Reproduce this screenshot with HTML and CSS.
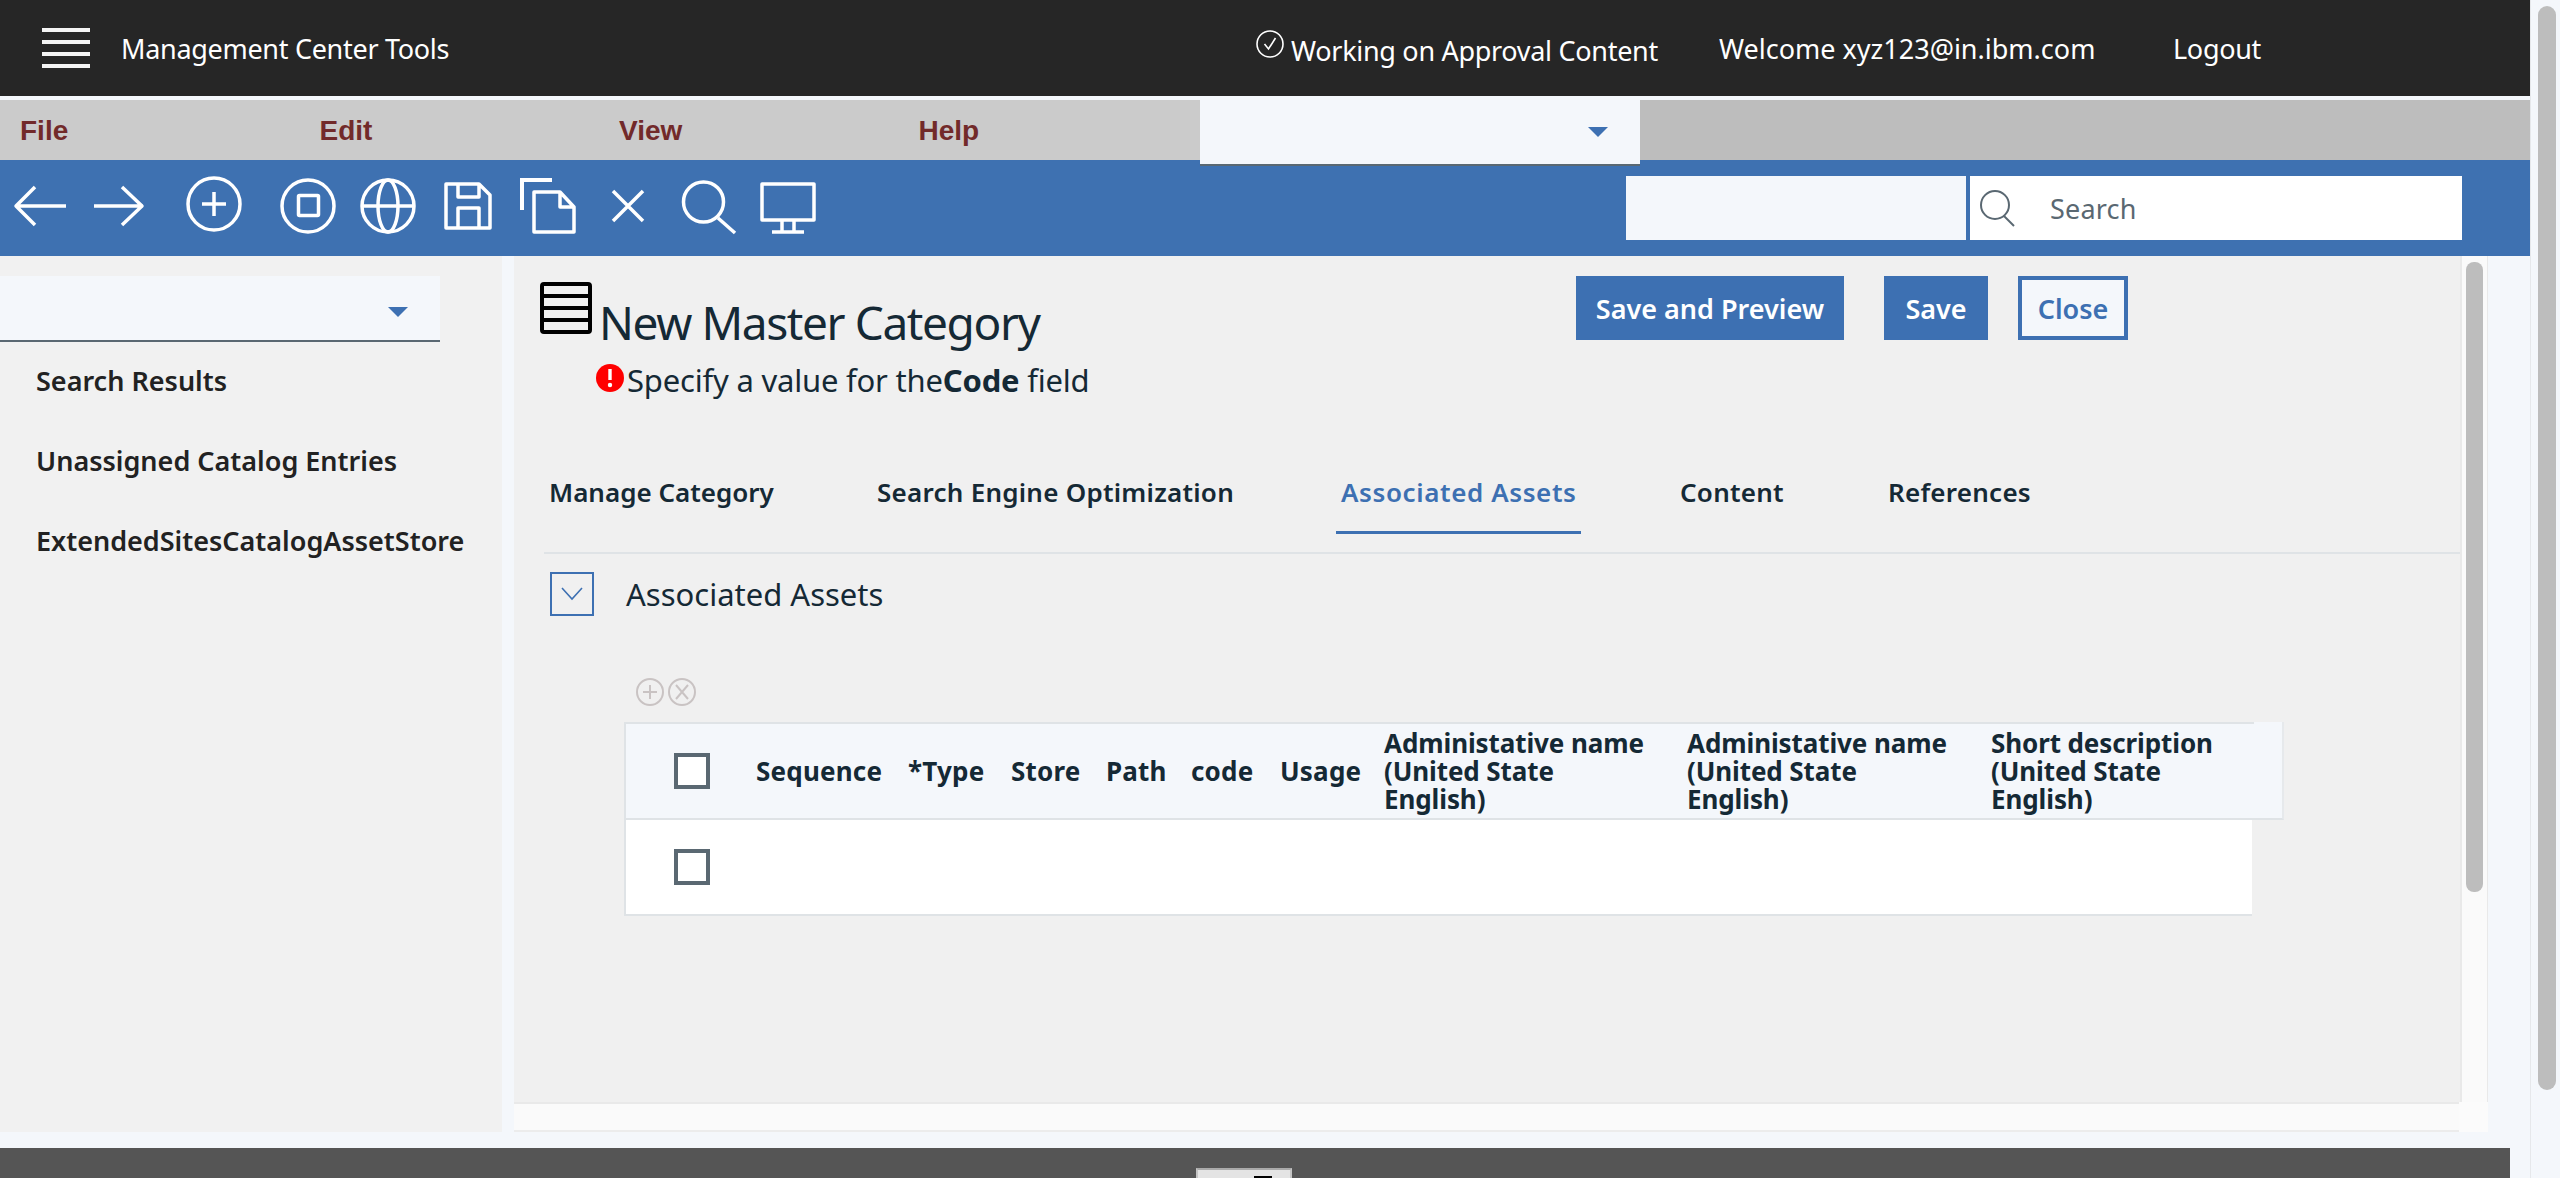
FILE: index.html
```html
<!DOCTYPE html>
<html lang="en">
<head>
    <meta charset="UTF-8">
    <title>Management Center Tools</title>
    <link rel="stylesheet" href="styles.css">
</head>
<body>
<div class="page">
    <div class="page-main">
        <div class="top-bar">
            <div class="hamburger"><span></span><span></span><span></span><span></span></div>
            <div class="app-title">Management Center Tools</div>
            <div class="working">
                <svg class="check-icon" width="28" height="28" viewBox="0 0 28 28" fill="none" stroke="#fff" stroke-width="1.6"><circle cx="14" cy="14" r="13"/><path d="M8.5 14l4 5L19.5 8"/></svg>
                <span>Working on Approval Content</span>
            </div>
            <div class="welcome">Welcome xyz123@in.ibm.com</div>
            <div class="logout">Logout</div>
        </div>

        <div class="menu-bar">
            <div class="menu-item">File</div>
            <div class="menu-item">Edit</div>
            <div class="menu-item">View</div>
            <div class="menu-item">Help</div>
            <div class="menu-select"><i class="caret"></i></div>
        </div>

        <div class="tool-bar">
            <svg class="tool-icons" width="830" height="96" viewBox="0 0 830 96" fill="none" stroke="#fff" stroke-width="3.5" stroke-linejoin="round">
                <path d="M66 46H16M35 27L16 46l19 19"/>
                <path d="M94 46h49M122 27l20 19-20 19"/>
                <circle cx="214" cy="44" r="26"/><path d="M214 32v24M202 44h24"/>
                <circle cx="308" cy="46" r="26"/><rect x="298.5" y="35.5" width="20" height="20" rx="1"/>
                <circle cx="388" cy="46" r="26"/><ellipse cx="388" cy="46" rx="10" ry="26"/><path d="M362 46h52"/>
                <path d="M446 24h33l11 11v33h-44zM458 24v13h21V24M458 68V48h21v20"/>
                <path d="M522 50V20h30" stroke-width="4" stroke-linejoin="miter"/>
                <path d="M534 32h26l14 15v25h-40zM560 32v15h14"/>
                <path d="M613 31l30 30M643 31l-30 30"/>
                <circle cx="703.5" cy="42" r="20"/><path d="M718 58l17 15"/>
                <path d="M762 24h52v36h-52zM782 60v12M794 60v12M772 72h32"/>
            </svg>
            <div class="search-blank"></div>
            <div class="search-box">
                <svg width="40" height="40" viewBox="0 0 40 40" fill="none" stroke="#5a6872" stroke-width="2"><circle cx="17" cy="17" r="14"/><path d="M26 28l10 10"/></svg>
                <span>Search</span>
            </div>
        </div>

        <div class="work-area">
            <div class="side-panel">
                <div class="side-select"><i class="caret"></i></div>
                <div class="side-item">Search Results</div>
                <div class="side-item">Unassigned Catalog Entries</div>
                <div class="side-item">ExtendedSitesCatalogAssetStore</div>
            </div>

            <div class="content">
                <div class="content-top">
                    <div class="panel">
                        <div class="form-head">
                            <div class="form-title">
                                <div class="title-line">
                                    <svg class="grid-icon" width="52" height="52" viewBox="0 0 52 52" fill="none" stroke="#000" stroke-width="4"><rect x="2" y="2" width="48" height="48" rx="2"/><path d="M2 14h48M2 26h48M2 38h48"/></svg>
                                    <h1>New Master Category</h1>
                                </div>
                                <div class="error-line">
                                    <svg width="28" height="28" viewBox="0 0 28 28"><circle cx="14" cy="14" r="14" fill="#f00"/><path d="M14 5v11" stroke="#fff" stroke-width="3.4"/><circle cx="14" cy="21" r="2.2" fill="#fff"/></svg>
                                    <span>Specify a value for the<b>Code</b> field</span>
                                </div>
                            </div>
                            <div class="form-buttons">
                                <button class="btn btn-preview">Save and Preview</button>
                                <button class="btn btn-save">Save</button>
                                <button class="btn btn-close">Close</button>
                            </div>
                        </div>

                        <div class="tabs">
                            <div class="tab">Manage Category</div>
                            <div class="tab">Search Engine Optimization</div>
                            <div class="tab active">Associated Assets</div>
                            <div class="tab">Content</div>
                            <div class="tab">References</div>
                        </div>

                        <div class="section-head">
                            <div class="collapse-btn"><svg width="24" height="14" viewBox="0 0 24 14" fill="none" stroke="#3d70b2" stroke-width="1.6"><path d="M2 1l10 11L22 1"/></svg></div>
                            <span>Associated Assets</span>
                        </div>

                        <div class="mini-tools">
                            <svg width="28" height="28" viewBox="0 0 28 28" fill="none" stroke="#c9c3c3" stroke-width="2"><circle cx="14" cy="14" r="13"/><path d="M14 7v14M7 14h14"/></svg>
                            <svg width="28" height="28" viewBox="0 0 28 28" fill="none" stroke="#c9c3c3" stroke-width="2"><circle cx="14" cy="14" r="13"/><path d="M8 7l12 14M20 7L8 21"/></svg>
                        </div>

                        <div class="assets-table">
                            <div class="table-row table-head">
                                <div class="cell"><i class="checkbox"></i></div>
                                <div class="cell">Sequence</div>
                                <div class="cell">*Type</div>
                                <div class="cell">Store</div>
                                <div class="cell">Path</div>
                                <div class="cell">code</div>
                                <div class="cell">Usage</div>
                                <div class="cell">Administative name (United State English)</div>
                                <div class="cell">Administative name (United State English)</div>
                                <div class="cell">Short description (United State English)</div>
                            </div>
                            <div class="table-row table-body">
                                <div class="cell"><i class="checkbox"></i></div>
                            </div>
                        </div>
                    </div>
                    <div class="panel-scroll"><div class="panel-thumb"></div></div>
                </div>
                <div class="content-strip"></div>
            </div>
        </div>

        <div class="footer-gap"></div>
        <div class="footer"><div class="footer-tab"><i></i></div></div>
    </div>
    <div class="page-scroll"><div class="page-thumb"></div></div>
</div>
</body>
</html>
```

FILE: styles.css
```css
* { box-sizing: border-box; }
html, body { margin: 0; height: 100%; overflow: hidden; }
body { background: #f4f7fb; font-family: "Noto Sans", Arial, sans-serif; color: #152935; }
.page { display: flex; height: 1178px; }
.page-main { width: 2530px; display: flex; flex-direction: column; }

.top-bar { height: 96px; background: #262626; color: #fff; display: flex; align-items: center; font-size: 27px; letter-spacing: -0.3px; flex: none; }
.hamburger { width: 48px; height: 40px; margin-left: 42px; display: flex; flex-direction: column; justify-content: space-between; flex: none; }
.hamburger span { height: 4px; background: #f4f4f4; }
.app-title { margin-left: 31px; width: 1135px; white-space: nowrap; }
.working { width: 463px; display: flex; align-items: flex-start; white-space: nowrap; }
.working span { padding-top: 4px; }
.check-icon { margin-top: 2px; margin-right: 7px; flex: none; }
.welcome { width: 454px; letter-spacing: 0; white-space: nowrap; }

.menu-bar { height: 60px; margin-top: 4px; background: #cbcbcb; display: flex; flex: none; position: relative; z-index: 2; }
.menu-item { width: 299.5px; padding: 15px 0 0 20px; font: bold 28px "Liberation Sans", Arial, sans-serif; color: #722a2a; }
.menu-select { width: 440px; height: 70px; margin-top: -4px; margin-left: 2px; background: #f4f7fb; border-bottom: 2px solid #5a6872; flex: none; display: flex; justify-content: flex-end; padding: 31px 32px 0 0; }
.menu-bar::after { content: ""; flex: 1; background: #bdbdbd; }
.caret { width: 0; height: 0; border-left: 10px solid transparent; border-right: 10px solid transparent; border-top: 10px solid #3d70b2; }

.tool-bar { height: 96px; background: #3e71b1; display: flex; align-items: center; flex: none; }
.tool-icons { flex: none; margin-right: 796px; }
.search-blank { width: 340px; height: 64px; background: #f4f7fb; }
.search-box { width: 492px; height: 64px; margin-left: 4px; background: #fff; display: flex; align-items: center; padding-left: 8px; color: #5a6872; font-size: 27px; letter-spacing: 0.2px; }
.search-box span { margin-left: 32px; }

.work-area { height: 876px; display: flex; flex: none; }
.side-panel { width: 502px; background: #f1f1f1; padding-top: 20px; flex: none; margin-right: 12px; }
.side-select { width: 440px; height: 66px; background: #f4f7fb; border-bottom: 2px solid #5a6872; display: flex; justify-content: flex-end; padding: 31px 32px 0 0; margin-bottom: -2px; }
.side-item { height: 80px; padding-left: 36px; display: flex; align-items: center; font-size: 27px; font-weight: 600; color: #222; white-space: nowrap; }

.content { flex: 1; display: flex; flex-direction: column; }
.content-top { height: 846px; display: flex; }
.panel { width: 1946px; background: #f0f0f0; flex: none; }
.panel-scroll { width: 28px; background: #fafafa; border-left: 2px solid #e9e9e9; border-right: 1px solid #e9e9e9; padding: 6px 4px 0 4px; flex: none; }
.panel-thumb { height: 630px; background: #bdbdbd; border-radius: 8px; }
.content-strip { width: 1974px; height: 30px; background: #fafafa; border-top: 2px solid #e9e9e9; border-bottom: 2px solid #ececec; position: relative; }
.content-strip::after { content: ""; position: absolute; right: 0; top: -2px; bottom: -2px; width: 29px; background: #fbfbfb; }

.form-head { height: 196px; display: flex; }
.form-title { width: 1062px; padding: 26px 0 0 26px; }
.title-line { display: flex; align-items: flex-start; }
.grid-icon { flex: none; }
h1 { margin: 0 0 0 7px; font-size: 46px; font-weight: 400; line-height: 60px; padding-top: 10px; letter-spacing: -1.4px; white-space: nowrap; }
.error-line { display: flex; align-items: flex-start; margin: 8px 0 0 56px; font-size: 31px; letter-spacing: -0.2px; line-height: 40px; white-space: nowrap; }
.error-line svg { flex: none; margin: 4px 3px 0 0; }
.form-buttons { display: flex; align-items: flex-start; padding-top: 20px; }
.btn { height: 64px; border: none; padding: 0; font: 600 27px "Noto Sans", Arial, sans-serif; background: #3d70b2; color: #fff; }
.btn-preview { width: 268px; margin-right: 40px; }
.btn-save { width: 104px; margin-right: 30px; }
.btn-close { width: 110px; background: #f4f7fb; color: #3d70b2; border: 4px solid #3d70b2; }

.tabs { height: 102px; margin-left: 30px; display: grid; grid-template-columns: 328px 464px 339px 208px 1fr; justify-items: start; align-items: start; border-bottom: 2px solid #dfe3e6; }
.tab { height: 82px; padding: 22px 5px 0 5px; font-size: 26px; font-weight: 600; letter-spacing: 0.25px; white-space: nowrap; }
.tab:first-child { letter-spacing: 0; }
.tab.active { color: #3d70b2; border-bottom: 3px solid #3d70b2; letter-spacing: 0.6px; }

.section-head { display: flex; align-items: center; margin: 18px 0 0 36px; height: 44px; font-size: 31px; }
.collapse-btn { width: 44px; height: 44px; border: 2px solid #3d70b2; margin-right: 32px; display: flex; align-items: center; justify-content: center; }

.mini-tools { display: flex; gap: 4px; margin: 62px 0 0 122px; height: 28px; }

.assets-table { margin: 16px 0 0 110px; width: 1660px; }
.table-row { display: grid; grid-template-columns: 130px 152px 103px 95px 85px 89px 104px 303px 304px 293px; }
.table-head { height: 98px; padding-top: 2px; background: linear-gradient(#dfe3e6, #dfe3e6) 0 0 / 1628px 2px no-repeat, #f4f7fb; border-bottom: 2px solid #dfe3e6; border-right: 2px solid #e6e9ec; border-left: 2px solid #dfe3e6; font-size: 26px; font-weight: 700; line-height: 28px; letter-spacing: 0.2px; }
.table-body { width: 1628px; height: 96px; background: #fff; border-left: 2px solid #dfe3e6; border-bottom: 2px solid #dfe3e6; }
.cell { display: flex; align-items: center; white-space: nowrap; }
.table-head .cell:nth-child(n+8) { white-space: normal; padding-right: 30px; letter-spacing: -0.1px; }
.checkbox { display: block; width: 36px; height: 36px; margin-left: 48px; border: 4px solid #5a6872; background: #fff; }

.footer-gap { height: 16px; flex: none; }
.footer { width: 2510px; height: 30px; background: #555; flex: none; display: flex; justify-content: center; padding-top: 20px; overflow: hidden; }
.footer-tab { width: 96px; height: 40px; margin-right: 22px; background: #e4e4e4; border: 2px solid #c4c4c4; border-top-color: #aaa; display: flex; justify-content: flex-end; padding: 6px 18px 0 0; }
.footer-tab i { display: block; width: 18px; height: 10px; background: #000; }

.page-scroll { flex: 1; background: #f4f7fb; border-left: 1px solid #e6e8eb; padding: 6px 4px 0 7px; }
.page-thumb { height: 1084px; background: #bdbdbd; border-radius: 9px; }
```
